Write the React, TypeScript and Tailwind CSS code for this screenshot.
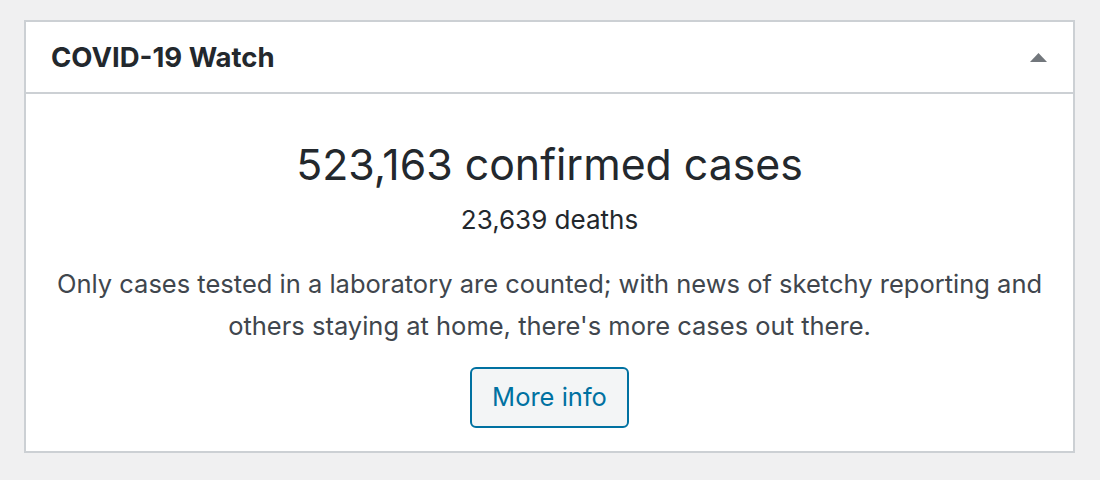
import React from 'react';

const font = { fontFamily: 'Inter, "Noto Sans", sans-serif' };

const CovidWidget: React.FC = () => {
  return (
    <div className="min-h-[480px] bg-[#f0f0f1] pt-[20px] pl-[24px] pr-[25px]" style={font}>
      <div className="border-2 border-[#ccd0d4] bg-white">
        {/* Header */}
        <div className="flex h-[72px] items-center justify-between border-b-2 border-[#ccd0d4] pl-[25px] pr-[26px]">
          <h2 className="pt-[1px] text-[27.5px] font-bold text-[#23282d]">COVID-19 Watch</h2>
          <svg width="17" height="9" viewBox="0 0 17 9">
            <polygon points="8.5,0 17,9 0,9" fill="#72777c" />
          </svg>
        </div>

        {/* Body */}
        <div className="flex flex-col items-center px-6 pt-[43px] pb-[23px] text-center text-[#23282d]">
          <p className="text-[42.8px] leading-[56px]">523,163 confirmed cases</p>
          <p className="mt-[11px] text-[26px] leading-[32px]">23,639 deaths</p>
          <p className="mt-[27px] text-[25.5px] leading-[42px] text-[#40464d]">
            Only cases tested in a laboratory are counted; with news of sketchy reporting and
            <br />
            others staying at home, there's more cases out there.
          </p>
          <button className="mt-[20px] h-[61px] w-[159px] rounded-[6px] border-2 border-[#0071a1] bg-[#f3f5f6] text-[25.5px] text-[#0071a1]">
            More info
          </button>
        </div>
      </div>
    </div>
  );
};

export default function App() {
  return <CovidWidget />;
}
